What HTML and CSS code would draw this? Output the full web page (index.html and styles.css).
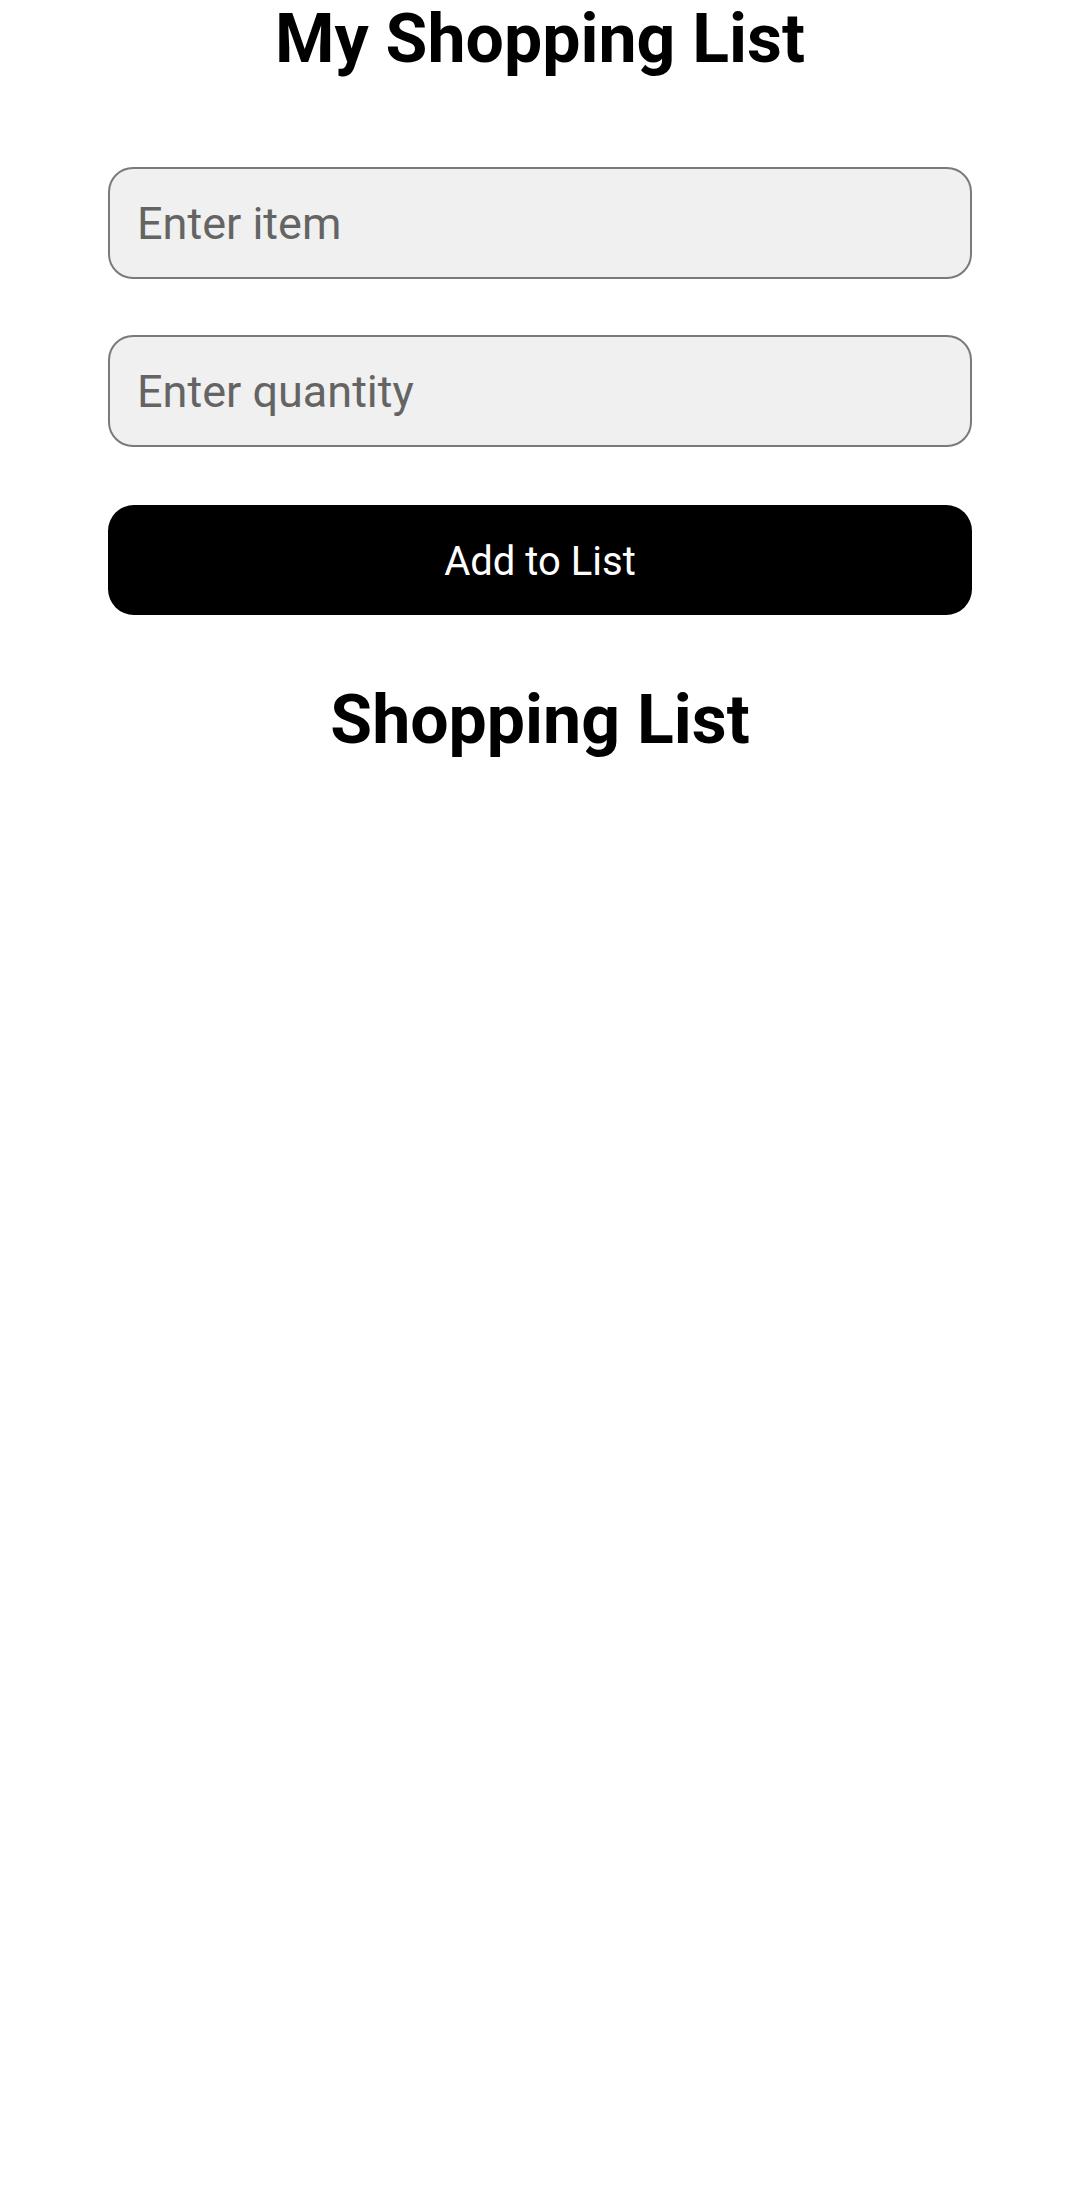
FILE: index.html
```html
<!DOCTYPE html>
<html lang="en">
<head>
<meta charset="utf-8">
<title>My Shopping List</title>
<link rel="stylesheet" href="styles.css">
</head>
<body>
<main class="app">
  <h1 class="title">My Shopping List</h1>
  <form class="form">
    <input class="field" type="text" placeholder="Enter item">
    <input class="field field-qty" type="text" placeholder="Enter quantity">
    <button class="add-btn" type="button">Add to List</button>
  </form>
  <h2 class="list-title">Shopping List</h2>
  <ul class="list"></ul>
</main>
</body>
</html>
```
FILE: styles.css
```css
html, body {
  margin: 0;
  padding: 0;
  background: #ffffff;
}

body {
  font-family: Roboto, "Liberation Sans", Arial, sans-serif;
  color: #000000;
  width: 1080px;
  min-height: 2207px;
}

.app {
  padding: 0 108px;
  display: flex;
  flex-direction: column;
}

.title {
  margin: -1px 0 0;
  font-size: 68px;
  line-height: 80px;
  font-weight: 700;
  text-align: center;
}

.form {
  margin-top: 88px;
  display: flex;
  flex-direction: column;
}

.field {
  box-sizing: border-box;
  width: 100%;
  height: 112px;
  margin: 0;
  padding: 0 27px;
  border: 2px solid #7a7a7a;
  border-radius: 25px;
  background: #f0f0f0;
  font-family: Roboto, "Liberation Sans", Arial, sans-serif;
  font-size: 45px;
  color: #222222;
  outline: none;
}

.field::placeholder {
  color: #646464;
  opacity: 1;
}

.field-qty {
  margin-top: 56px;
}

.add-btn {
  box-sizing: border-box;
  width: 100%;
  height: 110px;
  margin-top: 58px;
  padding: 2px 0 0;
  border: none;
  border-radius: 26px;
  background: #000000;
  color: #ffffff;
  font-family: Roboto, "Liberation Sans", Arial, sans-serif;
  font-size: 40px;
  font-weight: 400;
  cursor: pointer;
}

.list-title {
  margin: 65px 0 0;
  font-size: 68px;
  line-height: 80px;
  font-weight: 700;
  text-align: center;
}

.list {
  margin: 0;
  padding: 0;
  list-style: none;
}
```
